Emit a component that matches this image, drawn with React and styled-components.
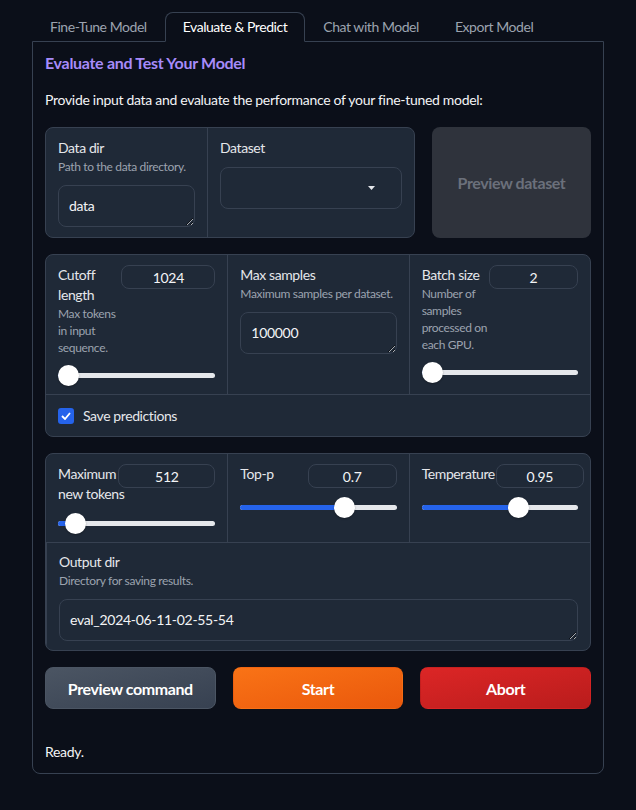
import styled, { createGlobalStyle } from "styled-components";

const GlobalStyle = createGlobalStyle`
  body {
    margin: 0;
    background: #0b0f19;
    font-family: "Lato", "Liberation Sans", sans-serif;
    color: #f3f4f6;
  }
  * { box-sizing: border-box; }
`;

function App() {
  return (
    <Page>
      <GlobalStyle />
      <TabBar>
        <Tab>Fine-Tune Model</Tab>
        <Tab active>Evaluate &amp; Predict</Tab>
        <Tab>Chat with Model</Tab>
        <Tab>Export Model</Tab>
      </TabBar>
      <Panel>
        <Heading>Evaluate and Test Your Model</Heading>
        <Intro>Provide input data and evaluate the performance of your fine-tuned model:</Intro>

        <TopRow>
          <Group cols="161px 1fr">
            <Cell $pb={10}>
              <Label>Data dir</Label>
              <Info>Path to the data directory.</Info>
              <TextArea rows={1} defaultValue="data" />
            </Cell>
            <Cell $pb={10}>
              <Label>Dataset</Label>
              <Select>
                <svg width="7" height="4" viewBox="0 0 7 4">
                  <path d="M0 0h7L3.5 4z" fill="#e5e7eb" />
                </svg>
              </Select>
            </Cell>
          </Group>
          <GhostButton>Preview dataset</GhostButton>
        </TopRow>

        <Group cols="1fr 1fr 1fr">
          <Cell>
            <SliderField label="Cutoff length" info="Max tokens in input sequence." value="1024" numWidth={94} pos={0} />
          </Cell>
          <Cell>
            <Label>Max samples</Label>
            <Info>Maximum samples per dataset.</Info>
            <TextArea rows={1} defaultValue="100000" />
          </Cell>
          <Cell>
            <SliderField label="Batch size" info="Number of samples processed on each GPU." value="2" numWidth={89} pos={0} />
          </Cell>
          <CheckRow>
            <Check>
              <svg width="10" height="8" viewBox="0 0 10 8">
                <path d="M1 4l3 3 5-6" stroke="#fff" strokeWidth="1.8" fill="none" />
              </svg>
            </Check>
            <span>Save predictions</span>
          </CheckRow>
        </Group>

        <Group cols="1fr 1fr 1fr">
          <Cell>
            <SliderField label={"Maximum\nnew tokens"} pre value="512" numWidth={97} pos={0.05} />
          </Cell>
          <Cell>
            <SliderField label="Top-p" value="0.7" numWidth={89} pos={0.69} />
          </Cell>
          <Cell>
            <SliderField label="Temperature" value="0.95" numWidth={88} pos={0.63} />
          </Cell>
          <WideCell>
            <Label>Output dir</Label>
            <Info>Directory for saving results.</Info>
            <TextArea rows={1} defaultValue="eval_2024-06-11-02-55-54" />
          </WideCell>
        </Group>

        <ButtonRow>
          <Button variant="secondary">Preview command</Button>
          <Button variant="primary">Start</Button>
          <Button variant="stop">Abort</Button>
        </ButtonRow>

        <Status>Ready.</Status>
      </Panel>
    </Page>
  );
}

function SliderField({ label, info, value, numWidth, pos, pre }) {
  return (
    <>
      <SliderHead>
        <HeadText $shrink={pre}>
          <Label $pre={pre}>{label}</Label>
          {info && <Info>{info}</Info>}
        </HeadText>
        <NumberBox style={{ width: numWidth }} readOnly value={value} />
      </SliderHead>
      <Slider>
        <Track />
        <Fill style={{ width: `calc((100% - 20px) * ${pos} + 10px)` }} />
        <Thumb style={{ left: `calc((100% - 20px) * ${pos})` }} />
      </Slider>
    </>
  );
}

// Styled Components
const Page = styled.div`
  padding: 12px 32px 36px;
`;

const TabBar = styled.div`
  display: flex;
  height: 29px;
`;

const Tab = styled.div`
  position: relative;
  z-index: 1;
  padding: 0 17px 2px;
  height: 30px;
  display: flex;
  align-items: center;
  font-size: 14px;
  letter-spacing: -0.45px;
  color: ${(p) => (p.active ? "#ffffff" : "#9ca3af")};
  background: ${(p) => (p.active ? "#0b0f19" : "transparent")};
  border: 1px solid ${(p) => (p.active ? "#374151" : "transparent")};
  border-bottom-color: transparent;
  border-radius: 8px 8px 0 0;
`;

const Panel = styled.div`
  border: 1px solid #374151;
  border-radius: 0 0 8px 8px;
  padding: 11px 12px 11px;
  display: flex;
  flex-direction: column;
  gap: 16px;
`;

const Heading = styled.div`
  font-size: 16px;
  font-weight: 700;
  line-height: 20px;
  letter-spacing: -0.3px;
  color: #a78bfa;
`;

const Intro = styled.div`
  font-size: 14px;
  line-height: 22px;
  letter-spacing: -0.3px;
  color: #f3f4f6;
`;

const TopRow = styled.div`
  display: grid;
  grid-template-columns: 370px 1fr;
  gap: 17px;
`;

const Group = styled.div`
  display: grid;
  grid-template-columns: ${(p) => p.cols};
  background: #1f2937;
  border: 1px solid #374151;
  border-radius: 8px;
  overflow: hidden;
`;

const Cell = styled.div`
  display: flex;
  flex-direction: column;
  padding: 10px 12px ${(p) => p.$pb ?? 9}px;
  min-width: 0;
  & + & {
    border-left: 1px solid #374151;
  }
`;

const WideCell = styled(Cell)`
  grid-column: 1 / -1;
  border-top: 1px solid #374151;
  border-left: none;
  padding-top: 9px;
`;

const Label = styled.div`
  font-size: 14px;
  line-height: 20px;
  letter-spacing: -0.4px;
  color: #e5e7eb;
  white-space: ${(p) => (p.$pre ? "pre" : "normal")};
`;

const Info = styled.div`
  font-size: 12px;
  line-height: 17px;
  letter-spacing: -0.35px;
  color: #9ca3af;
`;

const TextArea = styled.textarea`
  margin-top: 10px;
  height: 42px;
  width: 100%;
  resize: vertical;
  background: #1f2937;
  border: 1px solid #374151;
  border-radius: 8px;
  color: #f3f4f6;
  font-family: inherit;
  font-size: 14px;
  letter-spacing: -0.3px;
  line-height: 20px;
  padding: 10px 10px;
  outline: none;
  color-scheme: dark;
`;

const Select = styled.div`
  margin-top: 9px;
  height: 42px;
  border: 1px solid #374151;
  border-radius: 8px;
  display: flex;
  align-items: center;
  justify-content: flex-end;
  padding-right: 26px;
`;

const GhostButton = styled.div`
  display: flex;
  align-items: center;
  justify-content: center;
  background: #2f333c;
  border-radius: 8px;
  font-size: 16px;
  font-weight: 700;
  letter-spacing: -0.4px;
  color: #6b707b;
`;

const SliderHead = styled.div`
  display: flex;
  align-items: flex-start;
  gap: 1px;
`;

const HeadText = styled.div`
  flex: 1 1 auto;
  min-width: ${(p) => (p.$shrink ? "0" : "auto")};
`;

const NumberBox = styled.input`
  flex-shrink: 0;
  height: 24px;
  border: 1px solid #374151;
  border-radius: 8px;
  background: #1f2937;
  color: #f3f4f6;
  font-family: inherit;
  font-size: 14px;
  letter-spacing: -0.3px;
  text-align: center;
  outline: none;
`;

const Slider = styled.div`
  position: relative;
  height: 20px;
  margin-top: 9px;
`;

const Track = styled.div`
  position: absolute;
  left: 0;
  right: 0;
  top: 8px;
  height: 5px;
  border-radius: 3px;
  background: #e5e7eb;
`;

const Fill = styled.div`
  position: absolute;
  left: 0;
  top: 8px;
  height: 5px;
  border-radius: 3px;
  background: #2563eb;
`;

const Thumb = styled.div`
  position: absolute;
  top: 0;
  width: 21px;
  height: 21px;
  border-radius: 50%;
  background: #ffffff;
  box-shadow: 0 1px 2px rgba(0, 0, 0, 0.3);
`;

const CheckRow = styled.div`
  grid-column: 1 / -1;
  border-top: 1px solid #374151;
  display: flex;
  align-items: center;
  gap: 9px;
  height: 42px;
  padding: 0 12px;
  font-size: 14px;
  letter-spacing: -0.4px;
  color: #e5e7eb;
`;

const Check = styled.span`
  width: 16px;
  height: 16px;
  border-radius: 3px;
  background: #2563eb;
  display: flex;
  align-items: center;
  justify-content: center;
`;

const ButtonRow = styled.div`
  display: grid;
  grid-template-columns: 1fr 1fr 1fr;
  gap: 17px;
`;

const buttonBg = {
  secondary: "linear-gradient(to bottom right, #4b5563, #374151)",
  primary: "linear-gradient(to bottom right, #f97316, #ea580c)",
  stop: "linear-gradient(to bottom right, #dc2626, #b91c1c)",
};

const Button = styled.div`
  height: 42px;
  border-radius: 8px;
  display: flex;
  align-items: center;
  justify-content: center;
  font-size: 16px;
  font-weight: 700;
  letter-spacing: -0.4px;
  color: #ffffff;
  background: ${(p) => buttonBg[p.variant]};
  border: 1px solid ${(p) => (p.variant === "secondary" ? "#4b5563" : "transparent")};
`;

const Status = styled.div`
  margin-top: 17px;
  font-size: 14px;
  line-height: 20px;
  letter-spacing: -0.3px;
  color: #f3f4f6;
`;

export default App;
